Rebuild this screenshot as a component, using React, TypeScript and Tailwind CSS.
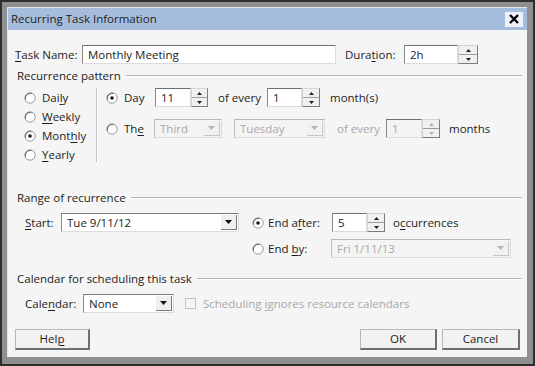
import React from 'react';

// Small classic-Windows style controls used by the dialog
const Radio: React.FC<{ checked?: boolean }> = ({ checked }) => (
    <svg width="12" height="12" viewBox="0 0 12 12" className="shrink-0">
        <circle cx="6" cy="6" r="5.2" fill="#ffffff" stroke="#9a9a9a" strokeWidth="1" />
        <path d="M1.6 7.5 A4.8 4.8 0 0 1 7.5 1.6" fill="none" stroke="#6a6a6a" strokeWidth="1" />
        {checked && <circle cx="6" cy="6" r="1.8" fill="#1a1a1a" />}
    </svg>
);

const Spinner: React.FC<{ w: number; disabled?: boolean }> = ({ w, disabled }) => (
    <div
        className="h-[19px] flex flex-col border-t border-l border-[#d4d4d4] border-r border-b border-r-[#7c7c7c] border-b-[#7c7c7c] bg-[#f0f0f0]"
        style={{ width: w }}
    >
        <div className="flex-1 flex items-center justify-center border-b border-[#9c9c9c]">
            <svg width="5" height="3" viewBox="0 0 5 3">
                <path d="M2.5 0 L5 3 L0 3 Z" fill={disabled ? '#b0b0b0' : '#202020'} />
            </svg>
        </div>
        <div className="flex-1 flex items-center justify-center">
            <svg width="5" height="3" viewBox="0 0 5 3">
                <path d="M0 0 L5 0 L2.5 3 Z" fill={disabled ? '#b0b0b0' : '#202020'} />
            </svg>
        </div>
    </div>
);

const TextBox: React.FC<{ w: number; value: string; disabled?: boolean }> = ({ w, value, disabled }) => (
    <div
        className={`h-[19px] flex items-center pl-[5px] border-t border-l border-t-[#6e6e6e] border-l-[#8a8a8a] border-r border-b border-r-[#dcdcdc] border-b-[#dcdcdc] ${disabled ? 'bg-[#f4f4f4] text-[#a8a8a8]' : 'bg-white text-[#1c1c1c]'}`}
        style={{ width: w }}
    >
        {value}
    </div>
);

const Dropdown: React.FC<{ w: number; value: string; disabled?: boolean }> = ({ w, value, disabled }) => (
    <div
        className={`h-[19px] flex items-center border-t border-l border-t-[#7a7a7a] border-l-[#8a8a8a] border-r border-b border-r-[#dcdcdc] border-b-[#dcdcdc] ${disabled ? 'bg-[#f4f4f4] text-[#a8a8a8] border-t-[#b8b8b8] border-l-[#bcbcbc]' : 'bg-white text-[#1c1c1c]'}`}
        style={{ width: w }}
    >
        <span className="flex-1 pl-[5px]">{value}</span>
        <div className={`w-[16px] h-[15px] mr-[1px] flex items-center justify-center border-r border-b ${disabled ? 'border-[#c8c8c8] bg-[#f2f2f2]' : 'border-[#7a7a7a] bg-[#efefef]'}`}>
            <svg width="7" height="4" viewBox="0 0 7 4">
                <path d="M0 0 L7 0 L3.5 4 Z" fill={disabled ? '#b4b4b4' : '#111111'} />
            </svg>
        </div>
    </div>
);

const Header: React.FC<{ text: string }> = ({ text }) => (
    <div className="h-[14px] flex items-center pl-[9px] pr-[5px]">
        <span className="text-[#1c1c1c]">{text}</span>
        <div className="flex-1 ml-[5px] h-[2px] border-t border-t-[#b4b4b4] border-b border-b-white" />
    </div>
);

const Button: React.FC<{ w: number; children: React.ReactNode }> = ({ w, children }) => (
    <div
        className="h-[21px] flex items-center justify-center bg-[#f2f2f2] border-t border-l border-[#b8b8b8] border-r-2 border-b-2 border-r-[#6e6e6e] border-b-[#6e6e6e] text-[#1c1c1c]"
        style={{ width: w }}
    >
        {children}
    </div>
);

export default function App() {
    return (
        <div className="w-[535px] h-[366px] bg-[#2e2e2e] p-[2px] font-['Open_Sans',sans-serif] text-[11.5px] leading-none">
            <div className="w-full h-full bg-[#8f8f8f] pl-[5px] pt-[5px] pr-[6px] pb-[7px]">
                <div className="w-full h-full flex flex-col border-l border-t border-[#e4e4e4] bg-[#f5f5f5]">
                    {/* title bar */}
                    <div className="h-[22px] shrink-0 flex items-center bg-[#a6bcdc] pl-[3px] pr-[4px]">
                        <span className="flex-1 text-[11.5px] text-[#1e1e1e]">Recurring Task Information</span>
                        <div className="w-[18px] h-[15px] flex items-center justify-center bg-[#eef2f8]">
                            <svg width="10" height="10" viewBox="0 0 10 10">
                                <path d="M1 1 L9 9 M9 1 L1 9" stroke="#000000" strokeWidth="2.4" />
                            </svg>
                        </div>
                    </div>

                    {/* task name + duration */}
                    <div className="mt-[15px] h-[19px] flex items-center pl-[7px]">
                        <span className="w-[67px] text-[#1c1c1c]"><u className="underline-offset-2">T</u>ask Name:</span>
                        <TextBox w={254} value="Monthly Meeting" />
                        <span className="ml-[9px] w-[59px] text-[#1c1c1c]">Dura<u className="underline-offset-2">t</u>ion:</span>
                        <TextBox w={54} value="2h" />
                        <Spinner w={20} />
                    </div>

                    <div className="mt-[5px]">
                        <Header text="Recurrence pattern" />
                    </div>

                    {/* recurrence pattern */}
                    <div className="mt-[5px] flex text-[#1c1c1c]">
                        <div className="w-[88px] flex flex-col pl-[16px]">
                            <div className="h-[19px] flex items-center gap-[6px]"><Radio /><span>Dai<u className="underline-offset-2">l</u>y</span></div>
                            <div className="h-[19px] flex items-center gap-[6px]"><Radio /><span><u className="underline-offset-2">W</u>eekly</span></div>
                            <div className="h-[19px] flex items-center gap-[6px]"><Radio checked /><span>Mont<u className="underline-offset-2">h</u>ly</span></div>
                            <div className="h-[19px] flex items-center gap-[6px]"><Radio /><span><u className="underline-offset-2">Y</u>early</span></div>
                        </div>
                        <div className="w-[2px] h-[74px] border-l border-l-[#c4c4c4] border-r border-r-white" />
                        <div className="flex flex-col pl-[8px]">
                            <div className="h-[19px] flex items-center">
                                <Radio checked />
                                <span className="ml-[6px] w-[31px]">Day</span>
                                <TextBox w={36} value="11" />
                                <Spinner w={17} />
                                <span className="ml-[10px] w-[49px]">of every</span>
                                <TextBox w={35} value="1" />
                                <Spinner w={18} />
                                <span className="ml-[10px]">month(s)</span>
                            </div>
                            <div className="mt-[12px] h-[19px] flex items-center">
                                <Radio />
                                <span className="ml-[6px] w-[30px]">Th<u className="underline-offset-2">e</u></span>
                                <Dropdown w={68} value="Third" disabled />
                                <div className="ml-[12px]"><Dropdown w={91} value="Tuesday" disabled /></div>
                                <span className="ml-[12px] w-[49px] text-[#a8a8a8]">of every</span>
                                <TextBox w={36} value="1" disabled />
                                <Spinner w={18} disabled />
                                <span className="ml-[9px]">months</span>
                            </div>
                        </div>
                    </div>

                    <div className="mt-[27px]">
                        <Header text="Range of recurrence" />
                    </div>

                    {/* range of recurrence */}
                    <div className="mt-[8px] h-[19px] flex items-center pl-[17px] text-[#1c1c1c]">
                        <span className="w-[36px]"><u className="underline-offset-2">S</u>tart:</span>
                        <Dropdown w={178} value="Tue 9/11/12" />
                        <div className="ml-[13px]"><Radio checked /></div>
                        <span className="ml-[4px] w-[64px]">End a<u className="underline-offset-2">f</u>ter:</span>
                        <TextBox w={35} value="5" />
                        <Spinner w={18} />
                        <span className="ml-[8px]">o<u className="underline-offset-2">c</u>currences</span>
                    </div>
                    <div className="mt-[7px] h-[19px] flex items-center pl-[244px] text-[#1c1c1c]">
                        <Radio />
                        <span className="ml-[4px] w-[63px]">End <u className="underline-offset-2">b</u>y:</span>
                        <Dropdown w={180} value="Fri 1/11/13" disabled />
                    </div>

                    <div className="mt-[14px]">
                        <Header text="Calendar for scheduling this task" />
                    </div>

                    {/* calendar */}
                    <div className="mt-[8px] h-[19px] flex items-center pl-[17px] text-[#1c1c1c]">
                        <span className="w-[58px]">Cale<u className="underline-offset-2">n</u>dar:</span>
                        <Dropdown w={91} value="None" />
                        <div className="ml-[11px] w-[11px] h-[11px] border border-[#c4c4c4] bg-[#f4f4f4]" />
                        <span className="ml-[7px] text-[#a8a8a8]">Scheduling <u className="underline-offset-2">i</u>gnores resource calendars</span>
                    </div>

                    {/* buttons */}
                    <div className="mt-[16px] flex items-center pl-[7px] pr-[7px]">
                        <Button w={75}>Hel<u className="underline-offset-2">p</u></Button>
                        <div className="flex-1" />
                        <Button w={77}>OK</Button>
                        <div className="ml-[5px]"><Button w={78}>Cancel</Button></div>
                    </div>
                </div>
            </div>
        </div>
    );
}
